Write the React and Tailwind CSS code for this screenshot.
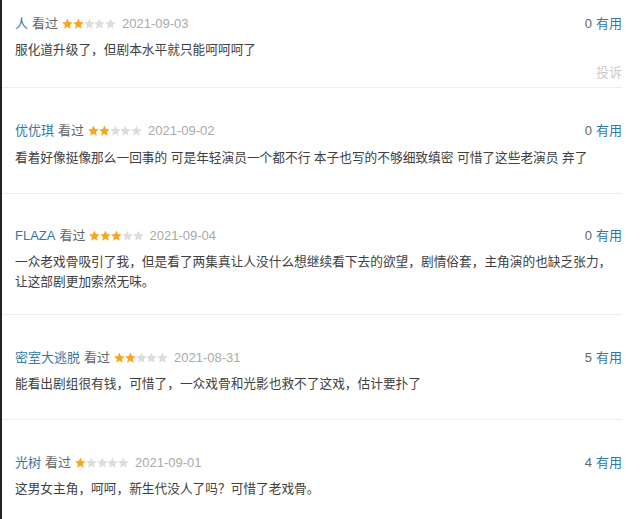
import React from "react";

const reviews = [
  { name: "人", stars: 2, date: "2021-09-03", useful: 0, text: "服化道升级了，但剧本水平就只能呵呵呵了", report: true, pad: "pt-[14px] pb-[4px]", gap: "mt-[6px]" },
  { name: "优优琪", stars: 2, date: "2021-09-02", useful: 0, text: "看着好像挺像那么一回事的 可是年轻演员一个都不行 本子也写的不够细致缜密 可惜了这些老演员 弃了", pad: "pt-[33px] pb-[25px]", gap: "mt-[7px]" },
  { name: "FLAZA", stars: 3, date: "2021-09-04", useful: 0, text: "一众老戏骨吸引了我，但是看了两集真让人没什么想继续看下去的欲望，剧情俗套，主角演的也缺乏张力，让这部剧更加索然无味。", pad: "pt-[32px] pb-[22px]", gap: "mt-[6px]" },
  { name: "密室大逃脱", stars: 2, date: "2021-08-31", useful: 5, text: "能看出剧组很有钱，可惜了，一众戏骨和光影也救不了这戏，估计要扑了", pad: "pt-[33px] pb-[25px]", gap: "mt-[6px]" },
  { name: "光树", stars: 1, date: "2021-09-01", useful: 4, text: "这男女主角，呵呵，新生代没人了吗？可惜了老戏骨。", pad: "pt-[33px] pb-[25px]", gap: "mt-[6px]" },
];

function Star({ on }) {
  return (
    <svg width="10.8" height="11.5" viewBox="0 0 24 24" className="shrink-0">
      <polygon
        points="12,0.5 15.4,8.2 23.8,9 17.5,14.6 19.3,22.9 12,18.6 4.7,22.9 6.5,14.6 0.2,9 8.6,8.2"
        fill={on ? "#f6a623" : "#dddddd"}
      />
    </svg>
  );
}

function Row({ r }) {
  return (
    <div className={`border-b border-[#eeeeee] pl-[13px] ${r.pad}`}>
      <div className="flex items-center h-[20px] leading-[20px] text-[13px]">
        <span className="text-[#3377aa]">{r.name}</span>
        <span className="ml-[4px] text-[#666666]">看过</span>
        <span className="ml-[4px] flex items-center">
          {[0, 1, 2, 3, 4].map((i) => (
            <Star key={i} on={i < r.stars} />
          ))}
        </span>
        <span className="ml-[6px] text-[#aaaaaa]">{r.date}</span>
        <span className="ml-auto">
          <span className="text-[#666666]">{r.useful}</span>
          <span className="ml-[4px] text-[#3377aa]">有用</span>
        </span>
      </div>
      <div className={`${r.gap} leading-[20px] text-[12.7px] text-[#404040]`}>{r.text}</div>
      {r.report && <div className="mt-[3px] h-[20px] leading-[20px] text-right text-[13px] text-[#cccccc]">投诉</div>}
    </div>
  );
}

export default function App() {
  return (
    <div className="w-[640px] h-[519px] bg-white overflow-hidden">
      <div
        className="w-[622px] border-l-2 border-[#222222]"
        style={{ fontFamily: '"Liberation Sans", "Noto Sans CJK SC", sans-serif' }}
      >
        {reviews.map((r, i) => (
          <Row key={i} r={r} />
        ))}
      </div>
    </div>
  );
}
